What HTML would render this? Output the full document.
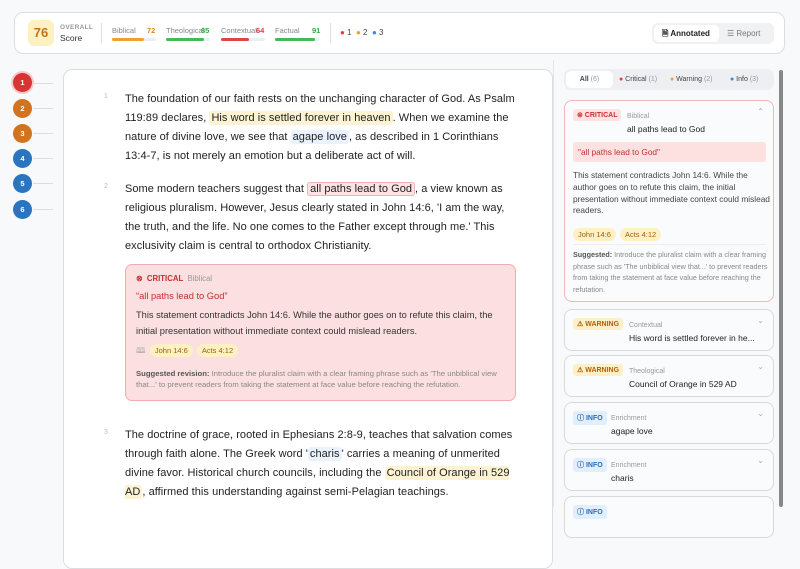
<!DOCTYPE html>
<html><head><meta charset="utf-8"><style>
*{box-sizing:border-box;margin:0;padding:0}
body{width:800px;height:507px;overflow:hidden;background:#f8f9fb;font-family:"Liberation Sans",sans-serif;color:#222;position:relative}
.abs{position:absolute}
.hdr{left:14px;top:12px;width:771px;height:42px;background:#fff;border:1px solid #dcdde0;border-radius:9px}
.score{left:13px;top:7px;width:26px;height:26px;background:#fdf1c4;border-radius:6px;color:#c0711a;font-weight:bold;font-size:13px;text-align:center;line-height:26px}
.bar{height:3px;border-radius:2px;background:#eceef1}
.bar i{display:block;height:3px;border-radius:2px}
.lbl{font-size:7.5px;color:#888}
.num{font-size:7.5px;font-weight:bold}
.doc{left:63px;top:69px;width:490px;height:500px;background:#fff;border:1px solid #dcdde0;border-radius:9px}
p.t{position:absolute;left:125px;width:394px;font-size:11px;line-height:19px;color:#222;letter-spacing:.05px}
.ln{position:absolute;left:104px;font-size:7px;color:#bbb}
.hy{background:#fdf3d2;border-radius:3px;padding:1px 2px}
.hb{background:#eaf3fd;border-radius:3px;padding:1px 2px}
.hr{background:#fde3e3;border:1px solid #f1b4b4;border-radius:3px;padding:0 2px}
.mk{width:19px;height:19px;border-radius:50%;color:#fff;font-size:7.5px;font-weight:bold;text-align:center;line-height:19px;left:13px}
.mkl{left:33px;width:20px;height:1px;background:#dcdde0}
.card{left:564px;width:210px;background:#fafbfc;border:1px solid #d8d9dc;border-radius:8px}
.badge{position:absolute;left:8px;top:8px;font-size:7px;font-weight:bold;padding:2px 4px;border-radius:3px}
.cat{position:absolute;font-size:7px;color:#999}
.tt{position:absolute;font-size:8.5px;color:#222}
.chev{position:absolute;right:9px;top:6px;font-size:8px;color:#aaa}
.tag{display:inline-block;background:#fdf1c4;color:#a0600e;font-size:7.5px;border-radius:8px;padding:2px 5px;margin-right:4px}
</style></head><body>
<div class="abs hdr">
 <div class="abs score">76</div>
 <div class="abs" style="left:45px;top:11px;font-size:6.5px;color:#999;font-weight:bold;letter-spacing:.3px">OVERALL</div>
 <div class="abs" style="left:45px;top:20px;font-size:8.5px;color:#333">Score</div>
 <div class="abs" style="left:86px;top:10px;width:1px;height:20px;background:#ddd"></div>
 <div class="abs lbl" style="left:97px;top:13px">Biblical</div><div class="abs num" style="left:132px;top:13px;color:#e08a1f">72</div>
 <div class="abs bar" style="left:97px;top:25px;width:44px"><i style="width:32px;background:#f0a030"></i></div>
 <div class="abs lbl" style="left:151px;top:13px">Theological</div><div class="abs num" style="left:186px;top:13px;color:#3aa84a">85</div>
 <div class="abs bar" style="left:151px;top:25px;width:44px"><i style="width:38px;background:#45b85a"></i></div>
 <div class="abs lbl" style="left:206px;top:13px">Contextual</div><div class="abs num" style="left:241px;top:13px;color:#d94040">64</div>
 <div class="abs bar" style="left:206px;top:25px;width:44px"><i style="width:28px;background:#e04545"></i></div>
 <div class="abs lbl" style="left:260px;top:13px">Factual</div><div class="abs num" style="left:297px;top:13px;color:#3aa84a">91</div>
 <div class="abs bar" style="left:260px;top:25px;width:44px"><i style="width:40px;background:#45b85a"></i></div>
 <div class="abs" style="left:315px;top:10px;width:1px;height:20px;background:#ddd"></div>
 <div class="abs" style="left:325px;top:15px;font-size:8px;color:#444"><span style="color:#e04040">●</span> 1 &nbsp;<span style="color:#f0a030">●</span> 2 &nbsp;<span style="color:#3a8ad8">●</span> 3</div>
 <div class="abs" style="left:637px;top:10px;width:122px;height:21px;background:#f0f1f3;border-radius:6px"></div>
 <div class="abs" style="left:639px;top:12px;width:65px;height:17px;background:#fff;border-radius:5px;font-size:8px;font-weight:bold;line-height:17px;padding-left:8px;color:#222">🗎 Annotated</div>
 <div class="abs" style="left:712px;top:12px;font-size:8px;line-height:17px;color:#777">☰ Report</div>
</div>

<div class="abs mk" style="top:73px;background:#d83434;box-shadow:0 0 0 2px #f6c9c9">1</div><div class="abs mkl" style="top:83px"></div>
<div class="abs mk" style="top:99px;background:#d27320">2</div><div class="abs mkl" style="top:108px"></div>
<div class="abs mk" style="top:124px;background:#d27320">3</div><div class="abs mkl" style="top:133px"></div>
<div class="abs mk" style="top:149px;background:#2a74c0">4</div><div class="abs mkl" style="top:158px"></div>
<div class="abs mk" style="top:174px;background:#2a74c0">5</div><div class="abs mkl" style="top:183px"></div>
<div class="abs mk" style="top:200px;background:#2a74c0">6</div><div class="abs mkl" style="top:209px"></div>

<div class="abs doc"></div>
<span class="ln" style="top:93px">1</span>
<p class="t" style="top:90px">The foundation of our faith rests on the unchanging character of God. As Psalm 119:89 declares, <span class="hy">His word is settled forever in heaven</span>. When we examine the nature of divine love, we see that <span class="hb">agape love</span>, as described in 1 Corinthians 13:4-7, is not merely an emotion but a deliberate act of will.</p>
<span class="ln" style="top:183px">2</span>
<p class="t" style="top:180px">Some modern teachers suggest that <span class="hr">all paths lead to God</span>, a view known as religious pluralism. However, Jesus clearly stated in John 14:6, 'I am the way, the truth, and the life. No one comes to the Father except through me.' This exclusivity claim is central to orthodox Christianity.</p>
<div class="abs" style="left:125px;top:264px;width:391px;height:137px;background:#fcdfe0;border:1px solid #f0aeb0;border-radius:7px">
 <div class="abs" style="left:10px;top:9px;font-size:7.8px;color:#c03030;font-weight:bold">⊗ &nbsp;CRITICAL <span style="color:#999;font-weight:normal">&nbsp;Biblical</span></div>
 <div class="abs" style="left:10px;top:26px;font-size:9.3px;color:#c03030">“all paths lead to God”</div>
 <div class="abs" style="left:10px;top:43px;width:375px;font-size:9.3px;line-height:15.5px;color:#333">This statement contradicts John 14:6. While the author goes on to refute this claim, the initial presentation without immediate context could mislead readers.</div>
 <div class="abs" style="left:10px;top:79px;font-size:8px;color:#aaa">🕮 &nbsp;<span class="tag">John 14:6</span><span class="tag">Acts 4:12</span></div>
 <div class="abs" style="left:10px;top:104px;width:372px;font-size:7.7px;line-height:10.5px;color:#888"><b style="color:#555">Suggested revision:</b> Introduce the pluralist claim with a clear framing phrase such as 'The unbiblical view that...' to prevent readers from taking the statement at face value before reaching the refutation.</div>
</div>
<span class="ln" style="top:429px">3</span>
<p class="t" style="top:426px">The doctrine of grace, rooted in Ephesians 2:8-9, teaches that salvation comes through faith alone. The Greek word '<span class="hb">charis</span>' carries a meaning of unmerited divine favor. Historical church councils, including the <span class="hy">Council of Orange in 529 AD</span>, affirmed this understanding against semi-Pelagian teachings.</p>

<div class="abs" style="left:553px;top:60px;width:247px;height:447px;background:#f8f9fb;border-left:1px solid #e4e5e8"></div>
<div class="abs" style="left:779px;top:70px;width:4px;height:437px;background:#888;border-radius:2px"></div>
<div class="abs" style="left:564px;top:69px;width:210px;height:21px;background:#eeeff2;border-radius:7px;font-size:7px;color:#444">
 <div class="abs" style="left:2px;top:2px;width:47px;height:17px;background:#fff;border-radius:5px;text-align:center;line-height:17px"><b>All</b> <span style="color:#999">(6)</span></div>
 <div class="abs" style="left:55px;top:2px;line-height:17px"><span style="color:#e04040">●</span> Critical <span style="color:#999">(1)</span></div>
 <div class="abs" style="left:106px;top:2px;line-height:17px"><span style="color:#f0a030">●</span> Warning <span style="color:#999">(2)</span></div>
 <div class="abs" style="left:166px;top:2px;line-height:17px"><span style="color:#3a8ad8">●</span> Info <span style="color:#999">(3)</span></div>
</div>

<div class="abs card" style="top:100px;height:202px;border-color:#f3b5b5">
 <div class="badge" style="background:#fde2e2;color:#c83030">⊗ CRITICAL</div>
 <div class="cat" style="left:62px;top:12px">Biblical</div>
 <div class="tt" style="left:62px;top:23px">all paths lead to God</div>
 <div class="chev">⌃</div>
 <div class="abs" style="left:8px;top:41px;width:193px;height:20px;background:#fde0e0;border-radius:3px;font-size:8.3px;color:#c03030;line-height:20px;padding-left:5px">"all paths lead to God"</div>
 <div class="abs" style="left:8px;top:69px;width:200px;font-size:8.3px;line-height:11.8px;color:#444">This statement contradicts John 14:6. While the author goes on to refute this claim, the initial presentation without immediate context could mislead readers.</div>
 <div class="abs" style="left:8px;top:123px"><span class="tag">John 14:6</span><span class="tag">Acts 4:12</span></div>
 <div class="abs" style="left:8px;top:143px;width:193px;height:1px;background:#eee"></div>
 <div class="abs" style="left:8px;top:148px;width:197px;font-size:7.2px;line-height:11.5px;color:#888"><b style="color:#555">Suggested:</b> Introduce the pluralist claim with a clear framing phrase such as 'The unbiblical view that...' to prevent readers from taking the statement at face value before reaching the refutation.</div>
</div>
<div class="abs card" style="top:309px;height:42px"><div class="badge" style="background:#fdf0c8;color:#b0600a">⚠ WARNING</div><div class="cat" style="left:64px;top:12px">Contextual</div><div class="tt" style="left:64px;top:23px">His word is settled forever in he...</div><div class="chev">⌄</div></div>
<div class="abs card" style="top:355px;height:42px"><div class="badge" style="background:#fdf0c8;color:#b0600a">⚠ WARNING</div><div class="cat" style="left:64px;top:12px">Theological</div><div class="tt" style="left:64px;top:23px">Council of Orange in 529 AD</div><div class="chev">⌄</div></div>
<div class="abs card" style="top:402px;height:42px"><div class="badge" style="background:#e1eefc;color:#2a6cc0">ⓘ INFO</div><div class="cat" style="left:46px;top:12px">Enrichment</div><div class="tt" style="left:46px;top:23px">agape love</div><div class="chev">⌄</div></div>
<div class="abs card" style="top:449px;height:42px"><div class="badge" style="background:#e1eefc;color:#2a6cc0">ⓘ INFO</div><div class="cat" style="left:46px;top:12px">Enrichment</div><div class="tt" style="left:46px;top:23px">charis</div><div class="chev">⌄</div></div>
<div class="abs card" style="top:496px;height:42px"><div class="badge" style="background:#e1eefc;color:#2a6cc0">ⓘ INFO</div></div>
</body></html>
